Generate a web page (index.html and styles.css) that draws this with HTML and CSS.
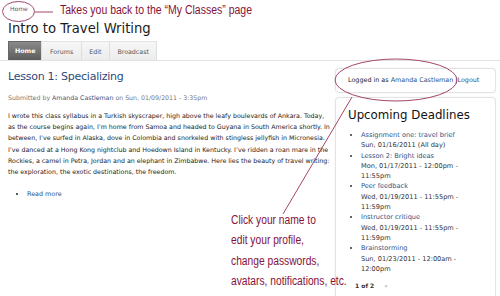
FILE: index.html
```html
<!DOCTYPE html>
<html lang="en">
<head>
  <meta charset="UTF-8">
  <title>Intro to Travel Writing</title>
  <link rel="stylesheet" href="styles.css">
</head>
<body>
<div class="page">

  <!-- Header: breadcrumb, site title, tabs -->
  <div class="breadcrumb"><a href="#">Home</a></div>
  <h1 class="site-title">Intro to Travel Writing</h1>
  <ul class="tabs">
    <li class="active"><a href="#">Home</a></li>
    <li><a href="#">Forums</a></li>
    <li><a href="#">Edit</a></li>
    <li><a href="#">Broadcast</a></li>
  </ul>

  <div class="layout">
    <!-- Main content -->
    <div class="content">
      <h2 class="node-title"><a href="#">Lesson 1: Specializing</a></h2>
      <div class="submitted">Submitted by <a href="#">Amanda Castleman</a> on Sun, 01/09/2011 - 3:35pm</div>
      <p class="body-text">I wrote this class syllabus in a Turkish skyscraper, high above the leafy boulevards of Ankara. Today, as the course begins again, I’m home from Samoa and headed to Guyana in South America shortly. In between, I’ve surfed in Alaska, dove in Colombia and snorkeled with stingless jellyfish in Micronesia. I’ve danced at a Hong Kong nightclub and Hoedown Island in Kentucky. I’ve ridden a roan mare in the Rockies, a camel in Petra, Jordan and an elephant in Zimbabwe. Here lies the beauty of travel writing: the exploration, the exotic destinations, the freedom.</p>
      <ul class="links">
        <li><a href="#">Read more</a></li>
      </ul>
    </div>

    <!-- Sidebar -->
    <div class="sidebar">
      <div class="block login">Logged in as <a href="#">Amanda Castleman</a> |<a href="#">Logout</a></div>
      <div class="block deadlines">
        <h3>Upcoming Deadlines</h3>
        <ul>
          <li><a href="#">Assignment one: travel brief</a><br>Sun, 01/16/2011 (All day)</li>
          <li><a href="#">Lesson 2: Bright ideas</a><br>Mon, 01/17/2011 - 12:00pm - 11:55pm</li>
          <li><a href="#">Peer feedback</a><br>Wed, 01/19/2011 - 11:55pm - 11:59pm</li>
          <li><a href="#">Instructor critique</a><br>Wed, 01/19/2011 - 11:55pm - 11:59pm</li>
          <li><a href="#">Brainstorming</a><br>Sun, 01/23/2011 - 12:00am - 12:00pm</li>
        </ul>
        <div class="pager"><strong>1 of 2</strong> <a href="#">»</a></div>
      </div>
    </div>
  </div>

  <!-- Help callouts drawn over the screenshot -->
  <svg class="callouts" width="500" height="296" viewBox="0 0 500 296">
    <ellipse cx="18.5" cy="11.5" rx="16" ry="10" />
    <line x1="34.5" y1="12" x2="53" y2="12" />
    <ellipse cx="396" cy="80" rx="61" ry="21" />
    <line x1="352" y1="97" x2="283" y2="214" />
  </svg>
  <div class="note note-home">Takes you back to the “My Classes” page</div>
  <div class="note note-profile">Click your name to<br>edit your profile,<br>change passwords,<br>avatars, notifications, etc.</div>
</div>
</body>
</html>
```

FILE: styles.css
```css
/* Reset */
* {
  margin: 0;
  padding: 0;
  box-sizing: border-box;
}

body {
  background: #fff;
  font-family: "DejaVu Sans", Verdana, sans-serif;
  color: #222;
  overflow: hidden;
}

a {
  color: #2f5286;
  text-decoration: none;
}

.page {
  position: relative;
  width: 500px;
  height: 296px;
  overflow: hidden;
}

/* Header */
.breadcrumb {
  padding: 5px 0 0 10px;
  height: 16px;
  font-size: 6px;
  line-height: 8px;
}
.breadcrumb a {
  color: #3b5b8c;
}

.site-title {
  padding-left: 8px;
  font-size: 13.2px;
  font-weight: normal;
  line-height: 25px;
  height: 24px;
  color: #1c1c1c;
}

.tabs {
  list-style: none;
  display: flex;
  padding-left: 8px;
  margin-top: 1px;
  border-bottom: 1px solid #e2e2e2;
}
.tabs li {
  height: 19px;
  background: linear-gradient(#f7f7f7, #ececec);
  border-left: 1px solid #dedede;
  border-top: 1px solid #e4e4e4;
}
.tabs li:last-child {
  border-right: 1px solid #dedede;
}
.tabs a {
  display: block;
  padding: 0 7.5px;
  font-size: 6.3px;
  line-height: 20px;
  color: #555;
}
.tabs li.active {
  background: linear-gradient(#8a8a8a, #5c5c5c);
  border-color: #666;
}
.tabs li.active a {
  padding: 0 6px;
  color: #fff;
  font-weight: bold;
  line-height: 17px;
}

/* Two columns */
.layout {
  display: flex;
  align-items: flex-start;
}

.content {
  width: 335px;
  padding: 6px 4px 0 8px;
}

.node-title {
  font-size: 11px;
  font-weight: normal;
  letter-spacing: -0.25px;
  line-height: 20px;
}
.node-title a {
  color: #2c4a7a;
}

.submitted {
  margin-top: 7px;
  font-size: 6.25px;
  color: #777;
}

.body-text {
  margin-top: 9px;
  font-size: 6.3px;
  line-height: 11.2px;
  color: #222;
}

.links {
  margin: 12px 0 0 19px;
  font-size: 6.4px;
  line-height: 11px;
}

/* Sidebar blocks */
.sidebar {
  width: 161px;
  margin-top: 7px;
}

.block {
  border: 1px solid #e3e3e3;
  border-radius: 4px;
  box-shadow: 0 0 2px #eee;
  background: #fff;
}

.login {
  height: 25px;
  padding-left: 12px;
  font-size: 6.4px;
  line-height: 23px;
  color: #222;
}

.deadlines {
  margin-top: 4px;
  padding: 8px 8px 20px 12px;
}
.deadlines h3 {
  font-size: 11.8px;
  font-weight: normal;
  line-height: 18px;
  color: #111;
}
.deadlines ul {
  margin: 6px 0 0 13px;
  font-size: 6.6px;
  line-height: 10.3px;
  color: #333;
}
.deadlines li {
  padding-right: 14px;
}

.pager {
  margin-top: 8px;
  padding-left: 7px;
  font-size: 6px;
  color: #333;
}
.pager a {
  margin-left: 8px;
  color: #888;
}

/* Callouts */
.callouts {
  position: absolute;
  left: 0;
  top: 0;
  pointer-events: none;
}
.callouts ellipse,
.callouts line {
  fill: none;
  stroke: #a4466a;
  stroke-width: 1;
}

.note {
  position: absolute;
  font-family: "Liberation Sans", Arial, sans-serif;
  font-size: 12.5px;
  color: #86123a;
  white-space: nowrap;
  transform-origin: 0 0;
  transform: scaleX(0.84);
}
.note-home {
  left: 60px;
  top: 2px;
  line-height: 16px;
}
.note-profile {
  left: 231px;
  top: 210px;
  line-height: 20.4px;
  transform: scaleX(0.82);
}
```
